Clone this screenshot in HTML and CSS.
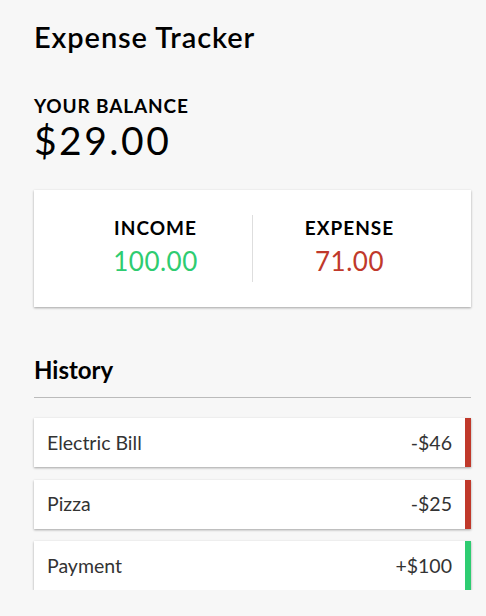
FILE: index.html
```html
<!DOCTYPE html>
<html lang="en">
<head>
<meta charset="utf-8">
<title>Expense Tracker</title>
<link rel="stylesheet" href="styles.css">
</head>
<body>
<div class="container">
  <h2 class="title">Expense Tracker</h2>
  <h4 class="label">Your Balance</h4>
  <h1 class="balance">$29.00</h1>
  <div class="inc-exp">
    <div class="col col-inc">
      <h4 class="col-label">Income</h4>
      <p class="money plus">100.00</p>
    </div>
    <div class="col">
      <h4 class="col-label">Expense</h4>
      <p class="money minus">71.00</p>
    </div>
  </div>
  <h3 class="history">History</h3>
  <ul class="list">
    <li class="item minus"><span>Electric Bill</span><span>-$46</span></li>
    <li class="item minus"><span>Pizza</span><span>-$25</span></li>
    <li class="item plus"><span>Payment</span><span>+$100</span></li>
  </ul>
</div>
</body>
</html>
```

FILE: styles.css
```css
* { box-sizing: border-box; }
body {
  margin: 0;
  background: #f7f7f7;
  font-family: Lato, "Noto Sans", sans-serif;
  color: #000;
}
.container {
  width: 437px;
  margin-left: 34px;
  padding-top: 21px;
}
.title {
  margin: 0;
  font-size: 29px;
  line-height: 32px;
  font-weight: 600;
  letter-spacing: 0.9px;
}
.label {
  margin: 41px 0 0;
  font-size: 19px;
  line-height: 23px;
  font-weight: 700;
  text-transform: uppercase;
  letter-spacing: 0.85px;
}
.balance {
  margin: 0;
  font-size: 39px;
  line-height: 46px;
  font-weight: 400;
  letter-spacing: 2.5px;
}
.inc-exp {
  margin-top: 27px;
  background: #fff;
  box-shadow: 0 1px 3px rgba(0,0,0,0.12), 0 1px 2px rgba(0,0,0,0.24);
  padding: 25px;
  display: flex;
}
.col {
  flex: 1;
  text-align: center;
}
.col-inc { border-right: 1px solid #dedede; }
.col-label {
  margin: 0;
  font-size: 19px;
  line-height: 26px;
  font-weight: 700;
  text-transform: uppercase;
  letter-spacing: 1px;
}
.money {
  margin: 4px 0 5px;
  font-size: 26px;
  line-height: 32px;
  letter-spacing: 0.5px;
}
.plus { color: #2ecc71; }
.minus { color: #c0392b; }
.history {
  margin: 48px 0 0;
  font-size: 24px;
  line-height: 29px;
  font-weight: 700;
  padding-bottom: 13px;
  border-bottom: 1px solid #bbb;
}
.list {
  list-style: none;
  margin: 20px 0 0;
  padding: 0;
  display: flex;
  flex-direction: column;
  gap: 12.5px;
}
.item {
  background: #fff;
  color: #333;
  box-shadow: 0 1px 3px rgba(0,0,0,0.12), 0 1px 2px rgba(0,0,0,0.24);
  display: flex;
  justify-content: space-between;
  padding: 12.5px 13px;
  font-size: 19.5px;
  line-height: 24px;
}
.item.minus { border-right: 6px solid #c0392b; }
.item.plus { border-right: 6px solid #2ecc71; }
```
